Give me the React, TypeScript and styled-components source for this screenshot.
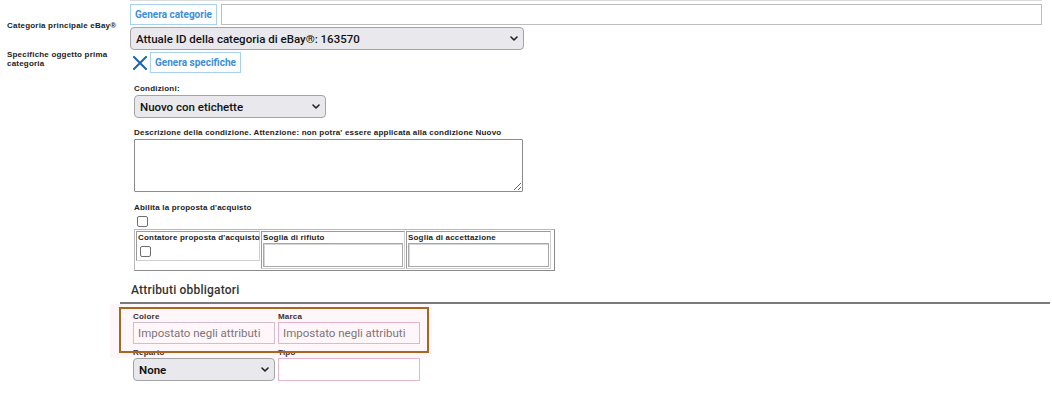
import React from "react"
import styled, { createGlobalStyle } from "styled-components"

const GlobalStyle = createGlobalStyle`
  html, body {
    margin: 0;
    padding: 0;
    background: #fff;
  }
  body {
    font-family: "Liberation Sans", Arial, sans-serif;
    color: #1b1b1b;
  }
  * { box-sizing: border-box; }
`

const Chevron = () => (
  <ChevronIcon width="8" height="5" viewBox="0 0 8 5">
    <polyline points="1,1 4,4 7,1" fill="none" stroke="#222" strokeWidth="1.6" strokeLinecap="round" strokeLinejoin="round" />
  </ChevronIcon>
)

const CloseIcon = () => (
  <svg width="14" height="14" viewBox="0 0 14 14">
    <path d="M1 1 L13 13 M13 1 L1 13" stroke="#1f63b6" strokeWidth="2" strokeLinecap="square" />
  </svg>
)

type SelectProps = { width: number; value: string; bold?: boolean }

const Select: React.FC<SelectProps> = ({ width, value, bold }) => (
  <SelectWrap $w={width}>
    <NativeSelect $bold={bold} defaultValue={value}>
      <option>{value}</option>
    </NativeSelect>
    <Chevron />
  </SelectWrap>
)

const App: React.FC = () => {
  return (
    <Page>
      <GlobalStyle />
      <FieldLabel>Categoria principale eBay®</FieldLabel>
      <Content $pad>
        <TopEdge />
        <ButtonRow>
          <GhostButton>Genera categorie</GhostButton>
          <WideInput />
        </ButtonRow>
        <SelectSpacer>
          <Select width={394} value="Attuale ID della categoria di eBay®: 163570" />
        </SelectSpacer>
      </Content>

      <FieldLabel $top>Specifiche oggetto prima categoria</FieldLabel>
      <Content>
        <SpecRow>
          <CloseIcon />
          <GhostButton>Genera specifiche</GhostButton>
        </SpecRow>

        <FormBlock>
          <SmallLabel $mt={11}>Condizioni:</SmallLabel>
          <SelectSpacer $mt={1}>
            <Select width={192} value="Nuovo con etichette" />
          </SelectSpacer>

          <SmallLabel $mt={10}>Descrizione della condizione. Attenzione: non potra' essere applicata alla condizione Nuovo</SmallLabel>
          <Description />

          <SmallLabel $mt={11}>Abilita la proposta d'acquisto</SmallLabel>
          <Check type="checkbox" />

          <OfferTable>
            <OfferCell $w={124}>
              <CellLabel>Contatore proposta d'acquisto</CellLabel>
              <CellCheck type="checkbox" />
            </OfferCell>
            <OfferCell $w={144}>
              <CellLabel>Soglia di rifiuto</CellLabel>
              <CellInput />
            </OfferCell>
            <OfferCell $w={145}>
              <CellLabel>Soglia di accettazione</CellLabel>
              <CellInput />
            </OfferCell>
          </OfferTable>
        </FormBlock>

        <SectionTitle>Attributi obbligatori</SectionTitle>
        <Divider />

        <AttrGrid>
          <Glow />
          <AttrField>
            <AttrLabel>Colore</AttrLabel>
            <AttrInput placeholder="Impostato negli attributi" />
          </AttrField>
          <AttrField>
            <AttrLabel>Marca</AttrLabel>
            <AttrInput $pink placeholder="Impostato negli attributi" />
          </AttrField>
          <AttrField>
            <AttrLabel>Reparto</AttrLabel>
            <Select width={142} value="None" bold />
          </AttrField>
          <AttrField>
            <AttrLabel>Tipo</AttrLabel>
            <AttrInput $pink $tall />
          </AttrField>
          <Highlight />
        </AttrGrid>
      </Content>
    </Page>
  )
}

export default App

const Page = styled.div`
  width: 1052px;
  height: 395px;
  overflow: hidden;
  display: grid;
  grid-template-columns: 120px 1fr;
  align-content: start;
`

const FieldLabel = styled.div<{ $top?: boolean }>`
  padding: 0 0 0 7px;
  font-size: 8px;
  font-weight: 700;
  letter-spacing: 0.2px;
  line-height: 9px;
  color: #222;
  align-self: ${({ $top }) => ($top ? "start" : "center")};
  padding-right: ${({ $top }) => ($top ? "8px" : "0")};
`

const Content = styled.div<{ $pad?: boolean }>`
  display: flex;
  flex-direction: column;
  padding: ${({ $pad }) => ($pad ? "0 10px 0 10px" : "0")};
`

const TopEdge = styled.div`
  height: 1px;
  background: #dadada;
`

const ButtonRow = styled.div`
  display: flex;
  gap: 4px;
  margin-top: 3px;
  height: 21px;
`

const GhostButton = styled.button`
  height: 21px;
  padding: 0 4px;
  border: 1px solid #a8d0f1;
  background: #fff;
  color: #3b8edb;
  font-family: Roboto, "Liberation Sans", sans-serif;
  font-size: 10px;
  font-weight: 700;
  white-space: nowrap;
  cursor: pointer;
`

const WideInput = styled.input`
  flex: 1;
  height: 21px;
  border: 1px solid #bdbdbd;
  background: #fff;
`

const SelectSpacer = styled.div<{ $mt?: number }>`
  margin-top: ${({ $mt }) => $mt ?? 2}px;
`

const SelectWrap = styled.div<{ $w: number }>`
  position: relative;
  width: ${({ $w }) => $w}px;
  height: 23px;
`

const NativeSelect = styled.select<{ $bold?: boolean }>`
  appearance: none;
  width: 100%;
  height: 23px;
  border: 1px solid #a3a3a3;
  border-radius: 4px;
  background: #e9e9ed;
  color: #111;
  font-family: Roboto, "Liberation Sans", sans-serif;
  font-size: 11.5px;
  font-weight: ${({ $bold }) => ($bold ? 600 : 500)};
  padding: 0 20px 0 5px;
  outline: none;
`

const ChevronIcon = styled.svg`
  position: absolute;
  right: 6px;
  top: 9px;
  pointer-events: none;
`

const SpecRow = styled.div`
  display: flex;
  align-items: center;
  gap: 3px;
  margin-top: 2px;
  padding-left: 13px;
  height: 21px;
`

const FormBlock = styled.div`
  display: flex;
  flex-direction: column;
  align-items: flex-start;
  padding-left: 14px;
`

const SmallLabel = styled.div<{ $mt: number }>`
  margin-top: ${({ $mt }) => $mt}px;
  font-size: 8px;
  font-weight: 700;
  letter-spacing: 0.2px;
  line-height: 10px;
  color: #222;
  white-space: nowrap;
`

const Description = styled.textarea`
  display: block;
  margin-top: 1px;
  width: 389px;
  height: 53px;
  border: 1px solid #8b8b8b;
  border-radius: 1px;
  background: #fff;
`

const Check = styled.input`
  appearance: none;
  display: block;
  width: 11px;
  height: 11px;
  margin: 3px 0 0 3px;
  border: 1px solid #6f6f6f;
  border-radius: 2px;
  background: #fff;
`

const OfferTable = styled.div`
  display: flex;
  align-items: flex-start;
  gap: 1px;
  width: 421px;
  margin-top: 2px;
  padding: 1px;
  border: 1px solid #8e8e8e;
  border-color: #b9b9b9 #8a8a8a #8a8a8a #b9b9b9;
`

const OfferCell = styled.div<{ $w: number }>`
  width: ${({ $w }) => $w}px;
  display: flex;
  flex-direction: column;
  border: 1px solid #b3b3b3;
  border-color: #9a9a9a #cfcfcf #cfcfcf #9a9a9a;
`

const CellLabel = styled.div`
  font-size: 8px;
  font-weight: 700;
  letter-spacing: 0.2px;
  line-height: 11px;
  padding: 0 1px;
  white-space: nowrap;
  color: #222;
`

const CellCheck = styled(Check)`
  margin: 3px 0 3px 3px;
`

const CellInput = styled.div`
  height: 24px;
  margin: 0 1px 1px;
  border: 1px solid #a8a8a8;
  box-shadow: inset 1px 1px 0 #d6d6d6;
  background: #fff;
`

const SectionTitle = styled.div`
  margin-top: 12px;
  padding-left: 11px;
  font-family: Roboto, "Liberation Sans", sans-serif;
  font-size: 12px;
  font-weight: 500;
  letter-spacing: 0.2px;
  line-height: 14px;
  color: #333;
`

const Divider = styled.div`
  margin: 5px 2px 0 0;
  height: 2px;
  background: #7a7a7a;
`

const AttrGrid = styled.div`
  position: relative;
  display: grid;
  grid-template-columns: 142px 142px;
  column-gap: 3px;
  row-gap: 4px;
  margin: 8px 0 0 13px;
  width: 287px;
`

const AttrField = styled.div`
  display: flex;
  flex-direction: column;
`

const AttrLabel = styled.span`
  font-size: 8px;
  font-weight: 700;
  letter-spacing: 0.2px;
  line-height: 10px;
  color: #222;
`

const AttrInput = styled.input<{ $pink?: boolean; $tall?: boolean }>`
  width: 142px;
  height: ${({ $tall }) => ($tall ? 23 : 22)}px;
  padding: 0 4px;
  border: 1px solid ${({ $pink }) => ($pink ? "#e6b4cb" : "#c8c2cc")};
  background: #fff;
  font-family: Roboto, "Liberation Sans", sans-serif;
  font-size: 11.5px;
  color: #222;
  outline: none;
  &::placeholder {
    color: #6f6f6f;
  }
`

const Glow = styled.div`
  position: absolute;
  left: -23px;
  top: -8px;
  width: 322px;
  height: 54px;
  background: rgba(255, 170, 210, 0.1);
  pointer-events: none;
`

const Highlight = styled.div`
  position: absolute;
  left: -14px;
  top: -5px;
  width: 310px;
  height: 46px;
  border: 2px solid #a8661e;
  pointer-events: none;
`
